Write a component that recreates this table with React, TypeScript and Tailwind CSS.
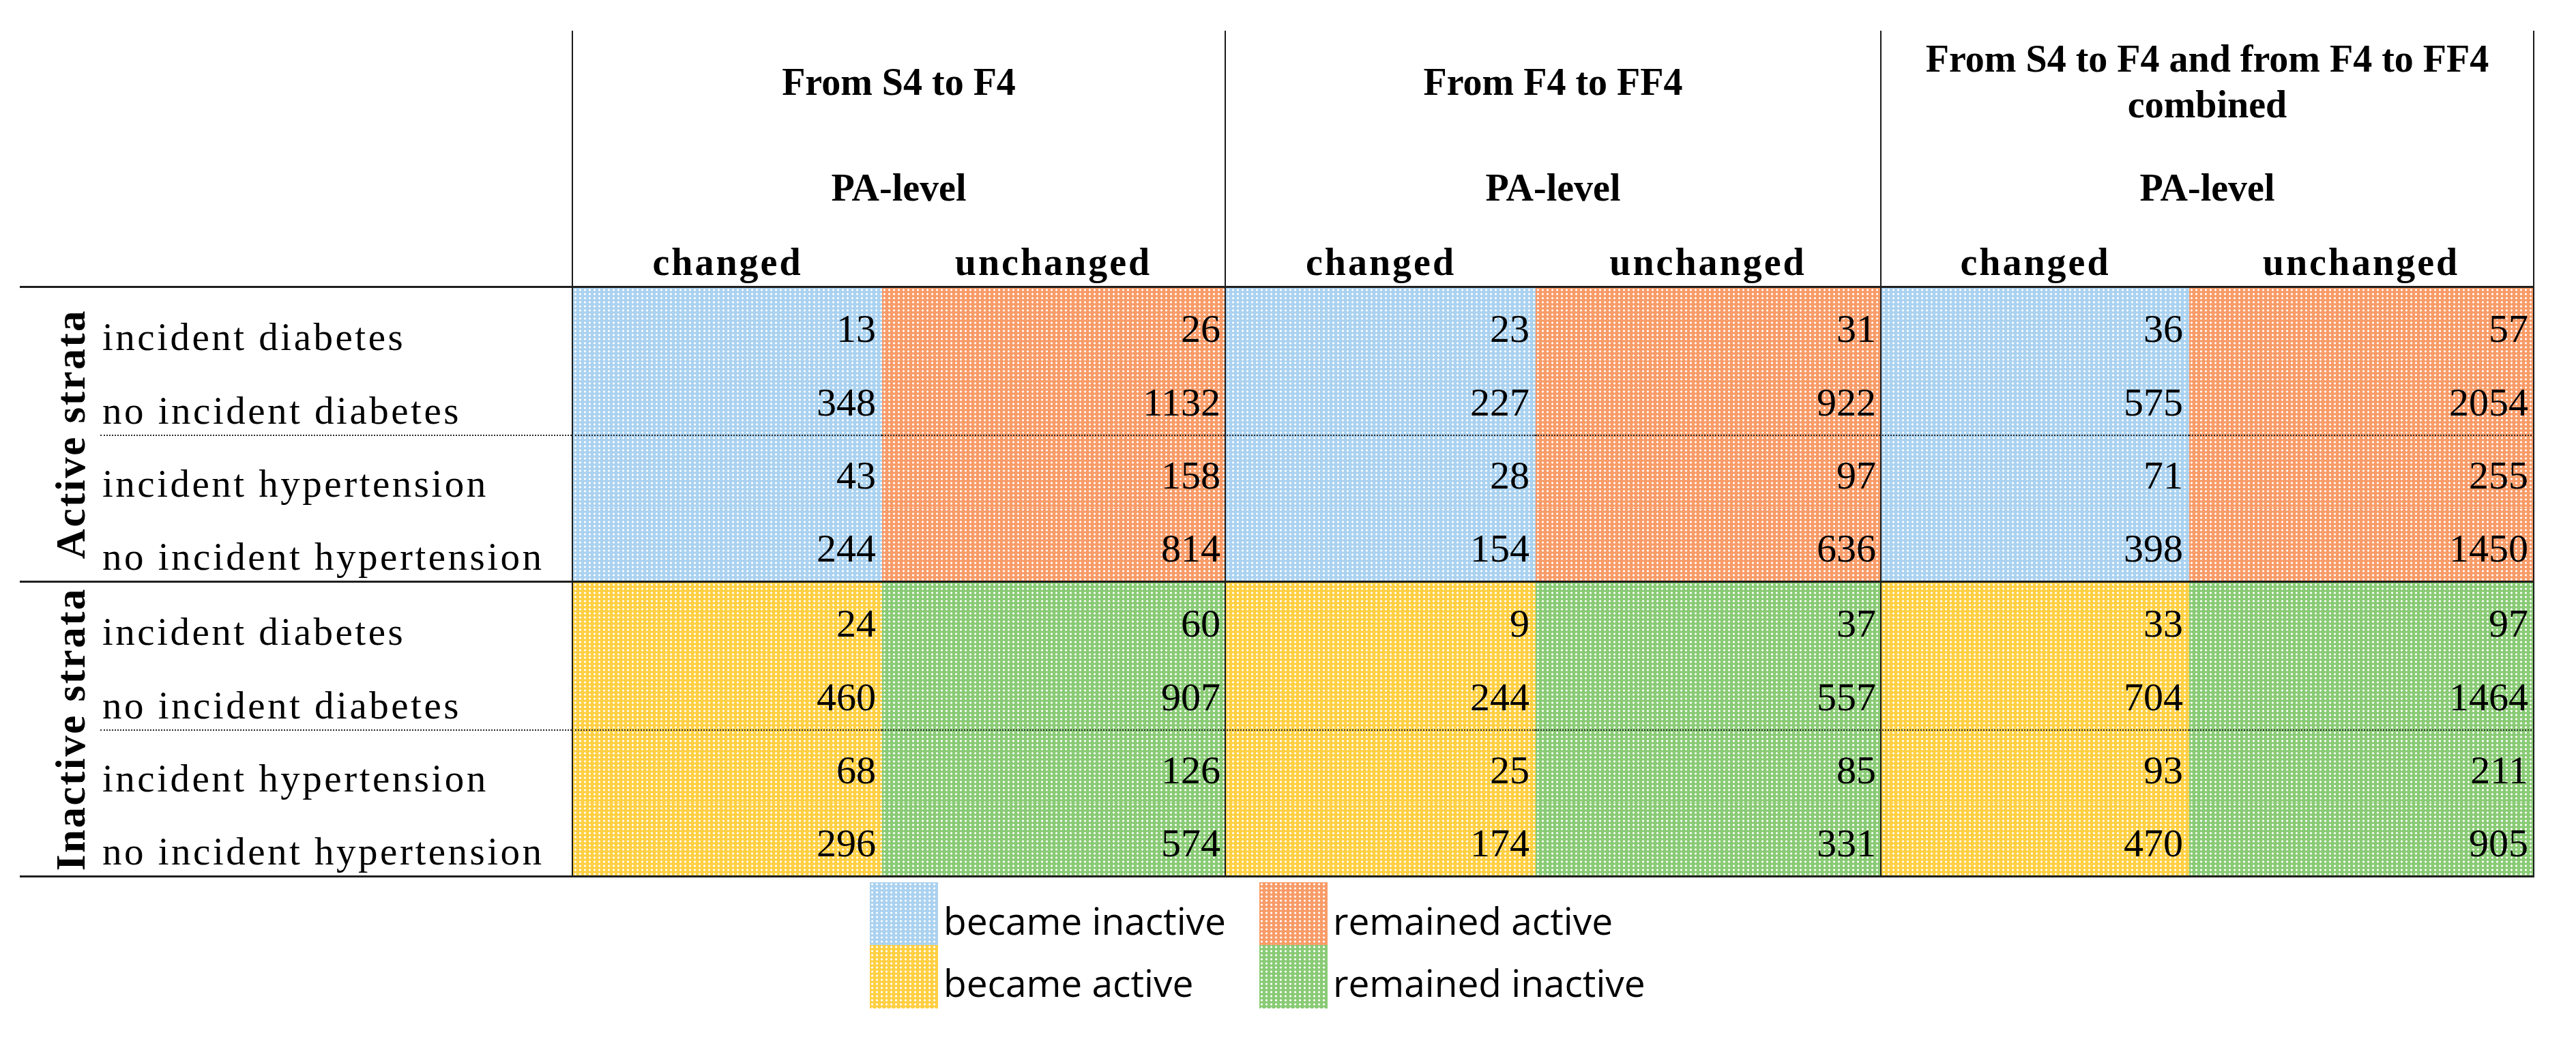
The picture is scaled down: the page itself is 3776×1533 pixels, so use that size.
const pattern: Record<string, string> = {
  blue: "bg-[#abd2f0] bg-[image:radial-gradient(circle,#ffffff_1.4px,transparent_1.8px)] bg-[length:7px_6px]",
  orange: "bg-[#f89c69] bg-[image:radial-gradient(circle,#ffffff_1.4px,transparent_1.8px)] bg-[length:7px_6px]",
  yellow: "bg-[#ffd044] bg-[image:radial-gradient(circle,#ffffff_1.4px,transparent_1.8px)] bg-[length:7px_6px]",
  green: "bg-[#8acb76] bg-[image:radial-gradient(circle,#ffffff_1.4px,transparent_1.8px)] bg-[length:7px_6px]",
};

const groups = [
  { title: 'From S4 to F4', w: 'w-[957px]', cols: 'grid-cols-[453px_502px]', last: false },
  { title: 'From F4 to FF4', w: 'w-[961px]', cols: 'grid-cols-[454px_505px]', last: false },
  { title: 'From S4 to F4 and from F4 to FF4 combined', w: 'w-[959px]', cols: 'grid-cols-[451px_504px]', last: true },
];

const sections = [
  {
    name: 'Active strata',
    colors: ['blue', 'orange'],
    rows: [
      { label: 'incident diabetes', values: [13, 26, 23, 31, 36, 57] },
      { label: 'no incident diabetes', values: [348, 1132, 227, 922, 575, 2054] },
      { label: 'incident hypertension', values: [43, 158, 28, 97, 71, 255] },
      { label: 'no incident hypertension', values: [244, 814, 154, 636, 398, 1450] },
    ],
  },
  {
    name: 'Inactive strata',
    colors: ['yellow', 'green'],
    rows: [
      { label: 'incident diabetes', values: [24, 60, 9, 37, 33, 97] },
      { label: 'no incident diabetes', values: [460, 907, 244, 557, 704, 1464] },
      { label: 'incident hypertension', values: [68, 126, 25, 85, 93, 211] },
      { label: 'no incident hypertension', values: [296, 574, 174, 331, 470, 905] },
    ],
  },
];

const legend = [
  { color: 'blue', text: 'became inactive' },
  { color: 'orange', text: 'remained active' },
  { color: 'yellow', text: 'became active' },
  { color: 'green', text: 'remained inactive' },
];

export default function App() {
  return (
    <div className="w-[3776px] h-[1533px] bg-white text-black pl-[29px] pt-[45px] font-['Liberation_Serif',serif]">
      <div className="w-[3686px]">
        {/* header */}
        <div className="flex h-[374px]">
          <div className="w-[809px]" />
          {groups.map((g) => (
            <div
              key={g.title}
              className={`${g.w} flex flex-col border-l-2 border-[#1a1a1a] ${g.last ? 'border-r-2' : ''} font-bold text-[56px]`}
            >
              <div className="h-[150px] flex items-center justify-center text-center px-[40px] leading-[67px]">
                {g.title}
              </div>
              <div className="h-[160px] flex items-center justify-center leading-none">PA-level</div>
              <div className={`flex-1 grid ${g.cols} items-end pb-[7px] leading-none tracking-[3px]`}>
                <div className="text-center">changed</div>
                <div className="text-center">unchanged</div>
              </div>
            </div>
          ))}
        </div>

        {/* body */}
        <div className="border-t-[3px] border-[#1f1f1f]">
          {sections.map((s) => (
            <div key={s.name} className="flex h-[432px] border-b-[3px] border-[#1f1f1f]">
              <div className="w-[118px] flex items-center justify-end pr-[13px]">
                <span className="[writing-mode:vertical-rl] rotate-180 font-bold text-[61px] leading-none tracking-[2.5px] whitespace-nowrap">
                  {s.name}
                </span>
              </div>
              <div className="flex-1 flex flex-col">
                {s.rows.map((r, i) => {
                  const dotted = i === 2 ? 'border-t-2 [border-top-style:dotted] border-t-[#2a2a2a]' : '';
                  return (
                    <div key={r.label} className="flex-1 grid grid-cols-[691px_455px_502px_456px_505px_453px_506px]">
                      <div className={`flex items-end pl-[3px] pb-[7px] text-[57px] leading-none tracking-[3.5px] whitespace-nowrap ${dotted}`}>
                        {r.label}
                      </div>
                      {r.values.map((v, j) => {
                        const changed = j % 2 === 0;
                        const color = pattern[s.colors[changed ? 0 : 1]];
                        const edge = changed
                          ? 'border-l-2 border-l-[#1a1a1a] pr-[9px]'
                          : j === 5
                          ? 'border-r-2 border-r-[#1a1a1a] pr-[7px]'
                          : 'pr-[6px]';
                        return (
                          <div
                            key={j}
                            className={`${color} ${edge} ${dotted} flex items-end justify-end pb-[18px] text-[58px] leading-none`}
                          >
                            {v}
                          </div>
                        );
                      })}
                    </div>
                  );
                })}
              </div>
            </div>
          ))}
        </div>

        {/* legend */}
        <div className="ml-[1246px] mt-[7px] grid grid-cols-[571px_auto] font-['Open_Sans',sans-serif]">
          {legend.map((l, i) => (
            <div key={l.text} className={`flex ${i < 2 ? 'h-[92px]' : 'h-[93px]'}`}>
              <div className={`${pattern[l.color]} w-[100px] h-full`} />
              <div className={`ml-[8px] self-center ${i < 2 ? 'pt-[18px]' : 'pt-[16px]'} text-[55px] leading-none whitespace-nowrap`}>
                {l.text}
              </div>
            </div>
          ))}
        </div>
      </div>
    </div>
  );
}
